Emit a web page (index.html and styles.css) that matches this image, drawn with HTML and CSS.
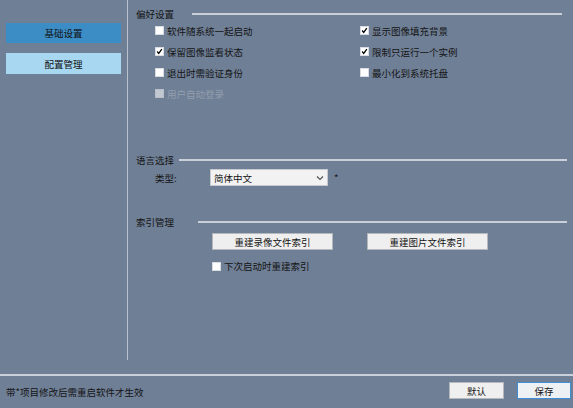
FILE: index.html
```html
<!DOCTYPE html>
<html lang="zh-CN">
<head>
<meta charset="utf-8">
<link rel="stylesheet" href="styles.css">
</head>
<body>
<div class="app">
  <div class="main">
    <nav class="sidebar">
      <div class="nav-item active">基础设置</div>
      <div class="nav-item light">配置管理</div>
    </nav>
    <div class="vsep"></div>
    <section class="content">
      <div class="sec-head h1"><span class="ttl">偏好设置</span><i class="rule r1"></i></div>
      <div class="checks">
        <label class="chk"><span class="box"></span>软件随系统一起启动</label>
        <label class="chk"><span class="box on"><svg viewBox="0 0 9 9"><polyline points="1.5,4.5 3.5,7 7.5,1.5"/></svg></span>显示图像填充背景</label>
        <label class="chk"><span class="box on"><svg viewBox="0 0 9 9"><polyline points="1.5,4.5 3.5,7 7.5,1.5"/></svg></span>保留图像监看状态</label>
        <label class="chk"><span class="box on"><svg viewBox="0 0 9 9"><polyline points="1.5,4.5 3.5,7 7.5,1.5"/></svg></span>限制只运行一个实例</label>
        <label class="chk"><span class="box"></span>退出时需验证身份</label>
        <label class="chk"><span class="box"></span>最小化到系统托盘</label>
        <label class="chk disabled"><span class="box"></span>用户自动登录</label>
      </div>

      <div class="sec-head h2"><span class="ttl">语言选择</span><i class="rule r2"></i></div>
      <div class="lang-row">
        <span class="lbl">类型:</span>
        <div class="select"><span>简体中文</span><svg viewBox="0 0 8 6"><polyline points="1,1.5 4,4.5 7,1.5"/></svg></div>
        <span class="star">*</span>
      </div>

      <div class="sec-head h3"><span class="ttl">索引管理</span><i class="rule r3"></i></div>
      <div class="btn-row">
        <button class="btn wide">重建录像文件索引</button>
        <button class="btn wide">重建图片文件索引</button>
      </div>
      <label class="chk idx"><span class="box"></span>下次启动时重建索引</label>
    </section>
  </div>
  <footer class="footer">
    <span class="note">带*项目修改后需重启软件才生效</span>
    <div class="actions">
      <button class="btn small">默认</button>
      <button class="btn small primary">保存</button>
    </div>
  </footer>
</div>
</body>
</html>
```
FILE: styles.css
```css
* { box-sizing: border-box; }
html, body { margin: 0; padding: 0; }
body {
  width: 573px;
  height: 408px;
  overflow: hidden;
  background: #6f7f96;
  font-family: "Noto Sans CJK SC", "Noto Sans", sans-serif;
  font-size: 9.5px;
  color: #141414;
}
.app { display: flex; flex-direction: column; height: 408px; }
.main { display: flex; height: 374px; }
.sidebar {
  width: 127px;
  padding: 23px 6px 0 6px;
  display: flex;
  flex-direction: column;
  gap: 10px;
}
.nav-item {
  height: 20px;
  display: flex;
  align-items: center;
  justify-content: center;
  color: #111;
}
.nav-item.active { background: #3c8dc6; }
.nav-item.light { background: #a7d7f1; height: 21px; }
.vsep { width: 1px; height: 360px; background: #b9c2ce; }
.content { flex: 1; padding: 8px 0 0 8px; display: flex; flex-direction: column; }
.sec-head { display: flex; align-items: center; height: 14px; }
.sec-head.h1 { height: 12px; }
.ttl { width: 38px; flex: none; white-space: nowrap; }
.rule { display: block; height: 2px; background: #c9d0da; flex: 1; }
.r1 { margin-left: 18px; margin-right: 11px; }
.r2 { margin-left: 5px; margin-right: 6px; }
.r3 { margin-left: 24px; margin-right: 6px; }
.checks {
  display: grid;
  grid-template-columns: 205px 1fr;
  grid-auto-rows: 21px;
  margin-left: 19px;
}
.chk { display: flex; align-items: center; gap: 2px; white-space: nowrap; }
.box {
  width: 9px;
  height: 9px;
  background: #fff;
  border: 1px solid #d8dce2;
  display: inline-flex;
  margin-right: 1px;
  flex: none;
}
.box svg { width: 7px; height: 7px; }
.box polyline { fill: none; stroke: #000; stroke-width: 1.6; }
.chk.disabled { color: #939eae; }
.chk.disabled .box { background: #c2c8d1; border-color: #b8bfc9; }
.h2 { margin-top: 49px; }
.lang-row { display: flex; align-items: center; height: 17px; margin-top: 2px; margin-left: 19px; }
.lbl { width: 55px; }
.select {
  width: 118px;
  height: 17px;
  background: #f2f2f2;
  border: 1px solid #c6c9cd;
  display: flex;
  align-items: center;
  justify-content: space-between;
  padding: 0 3px 0 3px;
}
.select svg { width: 8px; height: 6px; }
.select polyline { fill: none; stroke: #555; stroke-width: 1.2; }
.star { margin-left: 6px; }
.h3 { margin-top: 29px; }
.btn-row { display: flex; gap: 34px; margin-top: 4px; margin-left: 76px; }
.btn {
  font: inherit;
  color: #141414;
  background: #efefef;
  border: 1px solid #b4b8bd;
  height: 17px;
  padding: 0;
  display: flex;
  align-items: center;
  justify-content: center;
}
.btn.wide { width: 121px; }
.chk.idx { margin-top: 9px; margin-left: 76px; height: 14px; }
.footer {
  border-top: 2px solid #c9d0da;
  flex: 1;
  display: flex;
  align-items: center;
  justify-content: space-between;
  padding: 0 2px 0 6px;
}
.actions { display: flex; gap: 13px; margin-top: -3px; }
.btn.small { width: 55px; }
.btn.primary { width: 54px; border-color: #3f8fd6; background: #eef1f4; }
```
